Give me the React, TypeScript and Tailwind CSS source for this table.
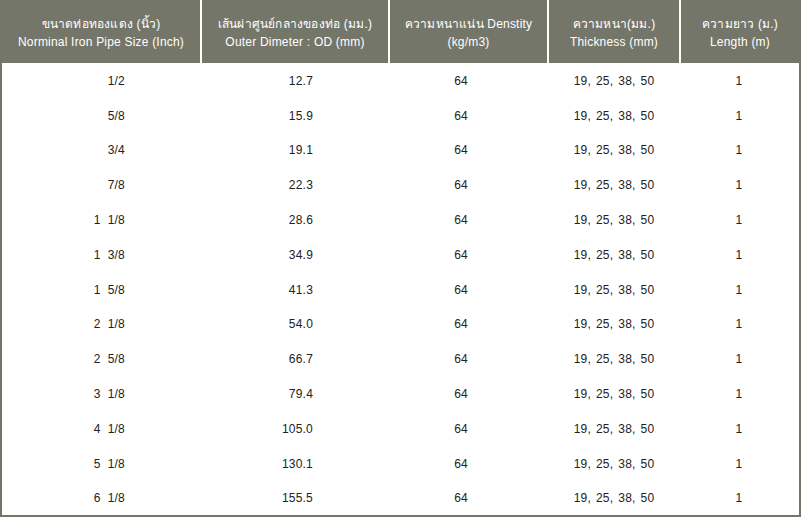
import React from 'react';

const rows = [
  ['1/2', '12.7'],
  ['5/8', '15.9'],
  ['3/4', '19.1'],
  ['7/8', '22.3'],
  ['1  1/8', '28.6'],
  ['1  3/8', '34.9'],
  ['1  5/8', '41.3'],
  ['2  1/8', '54.0'],
  ['2  5/8', '66.7'],
  ['3  1/8', '79.4'],
  ['4  1/8', '105.0'],
  ['5  1/8', '130.1'],
  ['6  1/8', '155.5'],
];

const cols = 'grid grid-cols-[198px_188px_159px_132px_120px]';

const headers = [
  ['ขนาดท่อทองแดง (นิ้ว)', 'Norminal Iron Pipe Size (Inch)'],
  ['เส้นผ่าศูนย์กลางของท่อ (มม.)', 'Outer Dimeter : OD (mm)'],
  ['ความหนาแน่น Denstity', '(kg/m3)'],
  ['ความหนา(มม.)', 'Thickness (mm)'],
  ['ความยาว (ม.)', 'Length (m)'],
];

export default function App() {
  return (
    <div
      className="w-[801px] h-[517px] bg-white border-x-2 border-b-2 border-[#75766a] overflow-hidden tracking-[0.2px]"
      style={{ fontFamily: '"Liberation Sans", Arial, "Noto Sans", "DejaVu Sans", sans-serif' }}
    >
      <div className={`${cols} h-[63px] bg-[#75766a] text-white text-[12px] leading-[18px]`}>
        {headers.map(([th, en], i) => (
          <div
            key={i}
            className={`flex flex-col items-center justify-center text-center pt-[2px] ${i > 0 ? 'border-l-2 border-white' : ''}`}
          >
            <span>{th}</span>
            <span>{en}</span>
          </div>
        ))}
      </div>
      {rows.map(([size, od], i) => (
        <div key={i} className={`${cols} h-[34.8px] items-center pt-[1px] text-[12px] text-[#222]`}>
          <div className="text-right pr-[75px] whitespace-pre">{size}</div>
          <div className="text-right pr-[75px]">{od}</div>
          <div className="text-right pr-[79px]">64</div>
          <div className="text-center pl-[2px] [word-spacing:1.5px]">19, 25, 38, 50</div>
          <div className="text-center">1</div>
        </div>
      ))}
    </div>
  );
}
